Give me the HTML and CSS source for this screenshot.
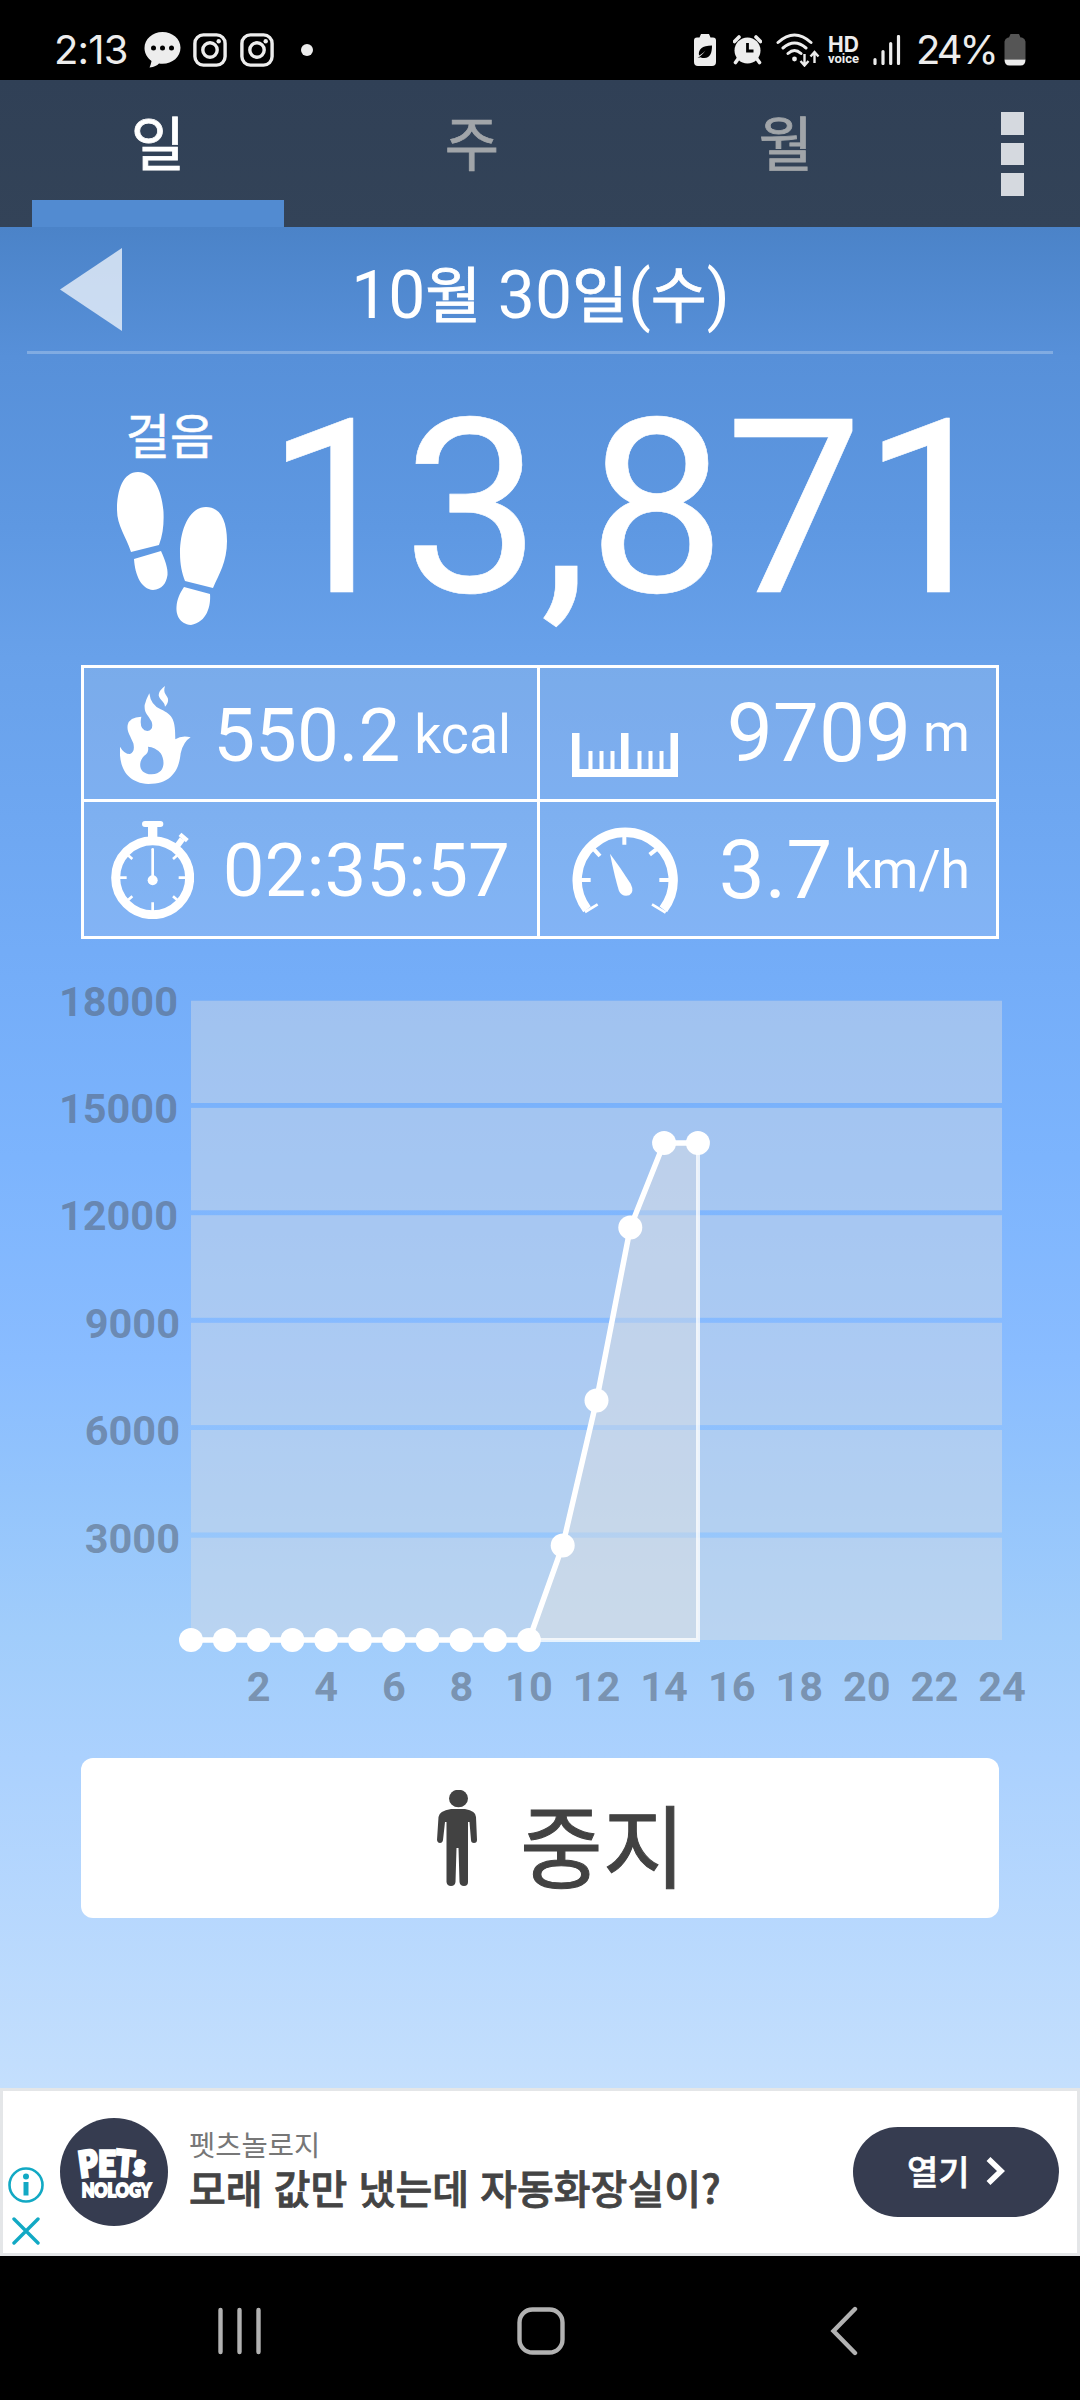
FILE: index.html
```html
<!DOCTYPE html>
<html lang="ko">
<head>
<meta charset="utf-8">
<title>만보기</title>
<link rel="stylesheet" href="styles.css">
</head>
<body>
<div class="screen">
  <header class="status">
    <span class="clock">2:13</span>
    <svg class="chat" width="37" height="36" viewBox="0 0 37 36"><path fill="#ededed" d="M18.500 0C8.500 0 .5 7 .5 16c0 5.500 3 10 7 13-.3 2-1 4.500-2 6.500 5-.5 7.500-2 9.500-4 1 .2 2.200.3 3.500.3 10 0 18-7 18-16S28.500 0 18.500 0Z"/><g fill="#000"><circle cx="9.500" cy="16" r="2.500"/><circle cx="18.500" cy="16" r="2.500"/><circle cx="27.500" cy="16" r="2.500"/></g></svg>
    <svg class="insta" width="34" height="34" viewBox="0 0 34 34"><g fill="none" stroke="#ededed" stroke-width="3.400"><rect x="1.900" y="1.900" width="30.200" height="30.200" rx="8.500"/><circle cx="17" cy="17" r="7.200"/></g><circle cx="25.700" cy="8.300" r="2.200" fill="#ededed"/></svg>
    <svg class="insta" width="34" height="34" viewBox="0 0 34 34"><g fill="none" stroke="#ededed" stroke-width="3.400"><rect x="1.900" y="1.900" width="30.200" height="30.200" rx="8.500"/><circle cx="17" cy="17" r="7.200"/></g><circle cx="25.700" cy="8.300" r="2.200" fill="#ededed"/></svg>
    <span class="more-dot"></span>
    <span class="spacer"></span>
    <svg class="saver" width="22" height="32" viewBox="0 0 22 32"><path fill="#ededed" d="M7 0h8l1.500 3.500H19q3 0 3 3V28q0 4-4 4H4q-4 0-4-4V6.500q0-3 3-3h2.500Z"/><path d="M18 11.500c0 7-1.500 13-8.500 12.500-1.500 0-2.500-.5-3-.8l-3 .8c2.500-1.500 5.500-4 8-7.500-3 3-4.500 4-6.500 5-1-6 3-10 13-10Z"/></svg>
    <svg class="alarm" width="29" height="30" viewBox="0 0 29 30"><circle cx="14.500" cy="15.500" r="13" fill="#ededed"/><path d="M5 24l-2.500 3.500M24 24l2.500 3.500M1.500 6.500L6 2M27.500 6.500L23 2" stroke="#ededed" stroke-width="3.600" stroke-linecap="round"/><path d="M14.500 8v8h6" fill="none" stroke="#000" stroke-width="2.800"/></svg>
    <svg class="wifi" width="44" height="34" viewBox="0 0 44 34"><g fill="none" stroke="#ededed" stroke-width="3" stroke-linecap="round"><path d="M2 9.500q16.500-15 33 0M7 15q11.500-10 23 0M12 20.500q6.500-6 13 0"/></g><circle cx="18.500" cy="26" r="2.400" fill="#ededed"/><path d="M28.500 21v11m-4-4l4 4.500 4-4.500M38.500 30V19.500m-4 4l4-4.500 4 4.500" fill="none" stroke="#ededed" stroke-width="2.400"/></svg>
    <span class="hd"><b>HD</b><i>voice</i></span>
    <svg class="signal" width="28" height="30" viewBox="0 0 28 30"><path d="M2 24.500v4M10 16.500v12M17.700 8.500v20M25.500 1.500v27" stroke="#ededed" stroke-width="3.200" stroke-linecap="round"/></svg>
    <span class="percent">24%</span>
    <svg class="battery" width="22" height="32" viewBox="0 0 22 32"><path fill="#555" d="M6.500 0h8.500l1.500 3.500H18q3 1 3.500 4V25.500H.5V7.500q.5-3 3.500-4h1Z"/><path fill="#ededed" d="M.5 25.500h21q0 6-5 6h-11q-5 0-5-6Z"/></svg>
  </header>

  <nav class="tabs">
    <a class="tab active">일</a>
    <a class="tab">주</a>
    <a class="tab">월</a>
    <div class="menu"><i></i><i></i><i></i></div>
  </nav>

  <main class="app">
    <section class="date-row">
      <svg class="prev" width="62" height="83" viewBox="0 0 62 83"><path d="M62 0v83L0 41.500Z" fill="#fff" fill-opacity=".7"/></svg>
      <h1 class="date">10<span class="ko">월</span> 30<span class="ko">일</span>(<span class="ko">수</span>)</h1>
    </section>

    <section class="steps">
      <div class="steps-side">
        <span class="steps-label">걸음</span>
        <svg class="feet" width="110" height="153" viewBox="117 472 110 153" fill="#fff"><path d="M138 472C123 472 117 490 117 510C117 526 126 536 131 552L159 545C163 534 164 524 163.500 512C162 490 153 472 138 472Z"/><path d="M134 559L161 551C165 560 168 568 167.500 575C166 584 162 589 153 590C141 589 135 575 134 559Z"/><path d="M206 507C189 507 180 530 180 553C180 565 182 573 185 581L213 588C219 574 227 562 227 541C227 520 220 507 206 507Z"/><path d="M184 587L210 594C211 606 207 622 191 625C179 624 176 614 176.500 607C177 599 180 593 184 587Z"/></svg>
      </div>
      <strong class="steps-value">13,871</strong>
    </section>

    <section class="stats">
      <div class="stat calories">
        <svg class="stat-icon" width="71" height="98" viewBox="150 108 213 294" fill="#fff"><path fill-rule="evenodd" d="M150 290Q162 312 180 312Q196 305 190 280C180 255 170 245 173 225Q178 201 214 200Q206 240 232 243Q252 240 245 215C235 195 222 190 224 165Q228 148 238 130Q242 165 272 178C310 195 316 212 316 268Q335 255 362 262Q340 275 332 310C328 350 312 402 235 402C165 398 146 345 150 290ZM234 290Q238 308 222 318C204 336 204 372 245 373C288 372 285 330 272 310Q255 290 234 290Z"/><path d="M285 108Q266 122 266 136C268 150 284 155 285 170Q296 158 294 146C290 134 278 130 285 108Z"/></svg>
        <span class="num">550.2</span><span class="unit">kcal</span>
      </div>
      <div class="stat distance">
        <svg class="stat-icon" width="106" height="44" viewBox="0 0 106 44" fill="#fff"><path d="M0 0h7.500v36H16.500V18h4V36h7V18h4V36h7V18h4V36H49V0h7.500V36H65.500V18h4V36h7V18h4V36h7V18h4V36H98.500V0H106V44H0Z"/></svg>
        <span class="num">9709</span><span class="unit">m</span>
      </div>
      <div class="stat duration">
        <svg class="stat-icon" width="83" height="98" viewBox="123 513 249 294" fill="none" stroke="#fff"><circle cx="248" cy="683" r="111" stroke-width="27"/><path fill="#fff" stroke="none" d="M225 513h46q9 0 9 9t-9 9h-9v34h-28v-34h-9q-9 0-9-9t9-9Z"/><path stroke-width="18" d="M320 590l17-23"/><path stroke-width="13" d="M330 553l22 19"/><path stroke-width="8" d="M140 683h30M326 683h30M248 757v30M170 612l17 15M326 612l-17 15M170 754l17-15M326 754l-17-15"/><path stroke-width="8" stroke-linecap="round" d="M248 598v90"/><circle cx="248" cy="691" r="15" fill="#fff" stroke="none"/></svg>
        <span class="num">02:35:57</span>
      </div>
      <div class="stat speed">
        <svg class="stat-icon" width="106" height="87" viewBox="126 530 318 261" fill="none" stroke="#fff"><path stroke-width="28" d="M171 777A144 144 0 1 1 400 777"/><path stroke-width="12" d="M283 550v33M192 597l18 20M379 597l-20 16M150 689h32M388 689h32"/><path stroke-width="8" d="M165 785l38-23M407 787l-41-25"/><path fill="#fff" stroke="none" d="M240 610Q270 650 302 700Q314 725 298 735Q276 741 267 722Q254 680 240 610Z"/></svg>
        <span class="num">3.7</span><span class="unit">km/h</span>
      </div>
    </section>

    <svg class="chart" width="1080" height="819" viewBox="0 939 1080 819">
      <g class="bands">
        <rect x="191" y="1000.700" width="811" height="102.300"/>
        <rect x="191" y="1107.900" width="811" height="102.400"/>
        <rect x="191" y="1215.200" width="811" height="102.600"/>
        <rect x="191" y="1322.800" width="811" height="102.300"/>
        <rect x="191" y="1430" width="811" height="102.500"/>
        <rect x="191" y="1537.700" width="811" height="102.300"/>
      </g>
      <g class="axis y-axis">
        <text x="178" y="1016">18000</text>
        <text x="178" y="1122.500">15000</text>
        <text x="178" y="1230">12000</text>
        <text x="180" y="1337.500">9000</text>
        <text x="180" y="1444.500">6000</text>
        <text x="180" y="1552.500">3000</text>
      </g>
      <g class="axis x-axis">
        <text x="258.600" y="1701">2</text>
        <text x="326.200" y="1701">4</text>
        <text x="393.800" y="1701">6</text>
        <text x="461.300" y="1701">8</text>
        <text x="528.900" y="1701">10</text>
        <text x="596.500" y="1701">12</text>
        <text x="664.100" y="1701">14</text>
        <text x="731.700" y="1701">16</text>
        <text x="799.200" y="1701">18</text>
        <text x="866.800" y="1701">20</text>
        <text x="934.400" y="1701">22</text>
        <text x="1002" y="1701">24</text>
      </g>
      <path class="area" d="M191 1640H529L562.700 1545.500L596.500 1400.600L630.300 1227.600L664 1143H698V1640Z"/>
      <path class="line" d="M191 1640H529L562.700 1545.500L596.500 1400.600L630.300 1227.600L664 1143H698"/>
      <g class="points">
        <circle cx="191" cy="1640" r="12"/><circle cx="224.800" cy="1640" r="12"/><circle cx="258.600" cy="1640" r="12"/><circle cx="292.400" cy="1640" r="12"/><circle cx="326.200" cy="1640" r="12"/><circle cx="360" cy="1640" r="12"/><circle cx="393.800" cy="1640" r="12"/><circle cx="427.500" cy="1640" r="12"/><circle cx="461.300" cy="1640" r="12"/><circle cx="495.100" cy="1640" r="12"/><circle cx="528.900" cy="1640" r="12"/><circle cx="562.700" cy="1545.500" r="12"/><circle cx="596.500" cy="1400.600" r="12"/><circle cx="630.300" cy="1227.600" r="12"/><circle cx="664.100" cy="1143" r="12"/><circle cx="697.900" cy="1143" r="12"/>
      </g>
    </svg>

    <button class="stop">
      <svg class="person" width="40" height="96" viewBox="437 1790 40 96" fill="#424242"><ellipse cx="458.500" cy="1798.500" rx="9.500" ry="8.800"/><path d="M451 1809H465Q476 1811 476 1817L477 1840Q477 1843 474 1843T471 1840L469.500 1822H468V1882Q468 1886 464 1886T459.500 1882L458.500 1848H456.500L455.500 1882Q455 1886 451 1886T446.500 1882V1822H445L443 1840Q442.500 1843 440 1843T437 1840L438.500 1817Q439 1811 451 1809Z"/></svg>
      <span>중지</span>
    </button>
  </main>

  <aside class="ad">
    <div class="ad-controls">
      <svg width="36" height="36" viewBox="0 0 36 36"><circle cx="18" cy="18" r="16.500" fill="none" stroke="#12a9c4" stroke-width="2.600"/><circle cx="18" cy="9.500" r="3" fill="#12a9c4"/><path d="M18 15v13.500" stroke="#12a9c4" stroke-width="5"/></svg>
      <svg width="28" height="28" viewBox="0 0 28 28"><path d="M2 2l24 24M26 2L2 26" stroke="#12a9c4" stroke-width="3.400" stroke-linecap="round"/></svg>
    </div>
    <div class="ad-logo"><span class="logo-top"><b class="l1">P</b><b>E</b><b class="l3">T</b><b class="l4">s</b></span><span class="logo-bottom">NOLOGY</span></div>
    <div class="ad-copy"><span class="ad-brand">펫츠놀로지</span><span class="ad-title">모래 값만 냈는데 자동화장실이?</span></div>
    <a class="ad-open"><span>열기</span><svg width="19" height="28" viewBox="0 0 19 28"><path d="M2.500 2L15 14 2.500 26" fill="none" stroke="#fff" stroke-width="5.600"/></svg></a>
  </aside>

  <footer class="navbar">
    <svg width="43" height="48" viewBox="0 0 43 48"><path d="M2.500 3v42M21.500 3v42M40.500 3v42" stroke="#b2b2b2" stroke-width="4.400" stroke-linecap="round"/></svg>
    <svg class="home" width="48" height="48" viewBox="0 0 48 48"><rect x="2.500" y="2.500" width="43" height="43" rx="13" fill="none" stroke="#b2b2b2" stroke-width="4.400"/></svg>
    <svg class="back" width="28" height="50" viewBox="0 0 28 50"><path d="M25 3L3.500 25 25 47" fill="none" stroke="#b2b2b2" stroke-width="4.400" stroke-linecap="round"/></svg>
  </footer>
</div>
</body>
</html>
```
FILE: styles.css
```css
* { box-sizing: border-box; }
body { margin: 0; background: #000; font-family: Roboto, "Noto Sans CJK KR", sans-serif; color: #fff; }
svg { display: block; flex: none; }
.screen { width: 1080px; height: 2400px; display: flex; flex-direction: column; overflow: hidden; }

.status { height: 80px; flex: none; display: flex; align-items: center; padding: 20px 54px 0 54px; background: #000; color: #ededed; }
.clock { width: 90px; font: 400 40px/60px Inter, sans-serif; letter-spacing: -.8px; }
.insta { margin-left: 12px; }
.insta + .insta { margin-left: 13px; }
.more-dot { width: 12px; height: 12px; margin-left: 27px; border-radius: 50%; background: #ededed; }
.spacer { flex: 1; }
.alarm { margin-left: 17px; }
.wifi { margin-left: 14px; }
.hd { width: 34px; margin-left: 8px; padding-top: 1px; display: flex; flex-direction: column; }
.hd b { font: 700 21px/16px Inter, sans-serif; }
.hd i { font: 700 13px/11px Roboto, sans-serif; }
.signal { margin-left: 11px; }
.percent { width: 89px; margin-left: 15px; font: 400 40px/60px Inter, sans-serif; letter-spacing: -3px; }
.battery { margin-left: -1px; }

.tabs { height: 147px; flex: none; display: flex; background: linear-gradient(#304056, #334358); }
.tab { width: 252px; height: 147px; margin-right: 62px; padding-top: 1px; font: 400 59px/130px Roboto, "Noto Sans CJK KR", sans-serif; -webkit-text-stroke: .8px currentColor; text-align: center; color: #a1a5a9; }
.tab:first-child { margin-left: 32px; }
.tab.active { color: #fff; border-bottom: 27px solid #528bd1; }
.menu { display: flex; flex-direction: column; gap: 8px; padding-top: 32px; margin-left: 27px; }
.menu i { width: 23px; height: 22.500px; background: #d5d9df; }

.app { height: 1861px; flex: none; display: flex; flex-direction: column; background: linear-gradient(#4b83c8 0, #5790d9 130px, #5e98e2 300px, #68a1ea 430px, #74adf8 750px, #7cb4fd 930px, #89bcff 1130px, #93c4fc 1260px, #a1cdfb 1410px, #abd1fe 1530px, #c4dffd 1861px); }
.date-row { height: 127px; margin: 0 27px; display: flex; align-items: flex-start; border-bottom: 3px solid rgba(255, 255, 255, .25); }
.prev { margin: 21px 0 0 33px; }
.date { flex: 1; margin: 29px 94px 0 0; font-size: 66px; line-height: 80px; font-weight: 400; text-align: center; }
.ko { font-size: 61px; -webkit-text-stroke: .8px #fff; }

.steps { height: 311px; display: flex; padding-left: 117px; }
.steps-side { width: 110px; padding-top: 54px; }
.steps-label { display: block; height: 64px; font-size: 48px; line-height: 60px; -webkit-text-stroke: .6px #fff; text-align: center; margin-right: 4px; }
.steps-value { margin: 35px 0 0 39px; font-size: 244px; line-height: 240px; font-weight: 400; -webkit-text-stroke: .6px #fff; }

.stats { width: 918px; height: 274px; flex: none; margin-left: 81px; display: grid; grid-template-columns: 453px 456px; grid-template-rows: 131px 134px; gap: 3px; padding: 3px; border: 0; background:
  linear-gradient(#fff, #fff) 0 0 / 100% 3px no-repeat, linear-gradient(#fff, #fff) 0 134px / 100% 3px no-repeat, linear-gradient(#fff, #fff) 0 271px / 100% 3px no-repeat,
  linear-gradient(#fff, #fff) 0 0 / 3px 100% no-repeat, linear-gradient(#fff, #fff) 456px 0 / 3px 100% no-repeat, linear-gradient(#fff, #fff) 915px 0 / 3px 100% no-repeat, rgba(240, 240, 240, .13); }
.stat { display: flex; align-items: flex-start; padding-right: 26px; }
.num { margin-left: auto; font-size: 74.500px; line-height: 80px; }
.unit { margin-left: 14px; font-size: 53.500px; line-height: 60px; }
.calories .stat-icon { margin: 18px 0 0 36px; }
.calories .num { margin-top: 28px; }
.calories .unit { margin-top: 37px; }
.distance .stat-icon { margin: 65px 0 0 32px; }
.distance .num, .speed .num { font-size: 82px; }
.distance .unit, .speed .unit { margin-left: 12px; }
.distance .num { margin-top: 25px; }
.distance .unit { margin-top: 35px; }
.duration { padding-right: 27px; }
.duration .stat-icon { margin: 19px 0 0 27px; }
.duration .num { margin-top: 29px; }
.speed .stat-icon { margin: 25px 0 0 32px; }
.speed .num { margin-top: 28px; }
.speed .unit { margin-top: 38px; }

.bands rect { fill: rgba(216, 221, 227, .44); }
.axis { font-size: 41.500px; font-weight: 700; fill: rgba(84, 95, 112, .55); }
.y-axis { text-anchor: end; }
.x-axis { text-anchor: middle; }
.area { fill: rgba(229, 226, 224, .38); stroke: rgba(255, 255, 255, .75); stroke-width: 4; }
.line { fill: none; stroke: #fff; stroke-width: 5.500; }
.points { fill: #fff; }

.stop { width: 918px; height: 160px; margin: 0 81px; padding: 0 0 0 356px; border: 0; border-radius: 12px; display: flex; background: #fff; color: #424242; font: 400 90px/100px Roboto, "Noto Sans CJK KR", sans-serif; }
.person { margin-top: 32px; }
.stop span { margin: 43px 0 0 43px; -webkit-text-stroke: 1px #424242; }

.ad { height: 168px; flex: none; display: flex; border: 3px solid #e4e6e8; background: #fff; color: #444; }
.ad-controls { width: 41px; padding: 76px 0 0 4px; display: flex; flex-direction: column; align-items: center; gap: 14px; }
.ad-logo { width: 108px; height: 108px; margin: 27px 0 0 16px; border-radius: 50%; background: #363c50; color: #fff; display: flex; flex-direction: column; align-items: center; padding-top: 25px; }
.logo-top { display: flex; font: 900 35px/38px Lato, sans-serif; -webkit-text-stroke: 3.500px #fff; paint-order: stroke; stroke-linejoin: round; gap: 1px; height: 36px; transform: scaleX(.86); margin-right: 3px; }
.logo-top b { font-weight: 900; }
.l1 { transform: rotate(-9deg); }
.l3 { transform: rotate(5deg); }
.l4 { transform: rotate(8deg); font-size: 27px; padding-top: 3px; }
.logo-bottom { font: 900 19px/22px Lato, sans-serif; -webkit-text-stroke: 2px #fff; margin-left: 4px; transform: scaleX(.86); }
.ad-copy { margin: 39px 0 0 21px; display: flex; flex-direction: column; }
.ad-brand { font-size: 28.500px; line-height: 34px; color: #777; }
.ad-title { margin-top: -5px; font: 500 40px/56px "Noto Sans CJK KR", sans-serif; -webkit-text-stroke: .8px #444; white-space: nowrap; }
.ad-open { width: 206px; height: 90px; margin: 36px 18px 0 auto; border-radius: 45px; background: #363c50; color: #fff; display: flex; align-items: center; padding: 0 0 2px 54px; gap: 16px; font: 500 34px/50px "Noto Sans CJK KR", sans-serif; -webkit-text-stroke: .6px #fff; }

.navbar { height: 144px; flex: none; display: flex; align-items: center; padding: 5px 0 0 218px; background: #000; }
.home { margin-left: 256px; }
.back { margin-left: 265px; }
```
